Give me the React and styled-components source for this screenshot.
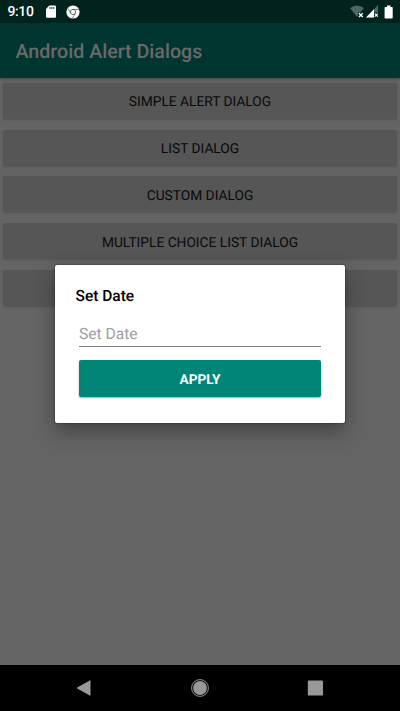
import React from 'react';
import styled, { createGlobalStyle } from 'styled-components';

const GlobalStyle = createGlobalStyle`
  *, *::before, *::after { box-sizing: border-box; }
  body {
    margin: 0;
    background: #000;
    font-family: Roboto, "Liberation Sans", sans-serif;
    text-rendering: geometricPrecision;
  }
  button, input { text-rendering: inherit; }
`;

const Phone = styled.div`
  position: relative;
  width: 400px;
  height: 711px;
  display: flex;
  flex-direction: column;
  background: #000;
  overflow: hidden;
`;

const StatusBar = styled.header`
  flex: none;
  height: 23.4px;
  display: flex;
  align-items: center;
  justify-content: space-between;
  padding: 0 6px 0 7.5px;
  background: #00231e;
  color: #fff;
`;

const StatusGroup = styled.div`
  display: flex;
  align-items: center;
  height: 24px;
  svg { display: block; }
`;

const NotificationGroup = styled(StatusGroup)`
  gap: 10px;
`;

const SystemGroup = styled(StatusGroup)`
  gap: 1px;
  svg:last-child { margin-left: 4px; }
`;

const Clock = styled.span`
  width: 28.5px;
  font-size: 14px;
  font-weight: 500;
  line-height: 24px;
  letter-spacing: -0.4px;
`;

const Activity = styled.div`
  flex: 1;
  display: flex;
  flex-direction: column;
  background: #646464;
`;

const AppBar = styled.div`
  flex: none;
  height: 54.2px;
  padding: 4px 15.5px 0;
  display: flex;
  align-items: center;
  background: #003530;
  box-shadow: 0 1px 3px rgba(0, 0, 0, 0.3);
  color: #696969;
`;

const AppTitle = styled.h1`
  margin: 0;
  font-size: 19.65px;
  font-weight: 500;
  line-height: 26px;
`;

const ButtonList = styled.main`
  display: flex;
  flex-direction: column;
  gap: 10.7px;
  padding: 5.4px 3px;
`;

const ListButton = styled.button`
  height: 36px;
  border: 0;
  border-radius: 2px;
  padding: 3px 0 0;
  background: #565656;
  box-shadow: 0 1px 2px rgba(0, 0, 0, 0.16);
  color: #090909;
  font: 400 13.75px/20px Roboto, "Liberation Sans", sans-serif;
  text-transform: uppercase;
`;

const DialogLayer = styled.div`
  position: absolute;
  inset: 0;
  padding-top: 265px;
  display: flex;
  justify-content: center;
  align-items: flex-start;
`;

const Dialog = styled.section`
  width: 290px;
  height: 157.7px;
  padding: 21px 24px 0;
  display: flex;
  flex-direction: column;
  border-radius: 2px;
  background: #fff;
  box-shadow: 0 0 1.5px rgba(0, 0, 0, 0.9), 0 8px 20px rgba(0, 0, 0, 0.35);
`;

const DialogTitle = styled.h2`
  margin: 0 0 0 -3.5px;
  font-size: 15.5px;
  font-weight: 500;
  line-height: 21px;
  color: #000;
`;

const DateField = styled.input`
  width: 242px;
  height: 27px;
  margin-top: 13px;
  padding: 1px 0 0;
  border: 0;
  border-bottom: 1px solid #808080;
  border-radius: 0;
  outline: none;
  background: transparent;
  font: 400 15.6px/22px Roboto, "Liberation Sans", sans-serif;
  color: #111;
  &::placeholder { color: #9d9d9d; opacity: 1; }
`;

const ApplyButton = styled.button`
  width: 242px;
  height: 37px;
  margin-top: 13px;
  padding: 3px 0 0;
  border: 0;
  border-radius: 2px;
  background: #008577;
  color: #fff;
  box-shadow: 0 1px 2px rgba(0, 0, 0, 0.35);
  font: 700 13.7px/20px Roboto, "Liberation Sans", sans-serif;
`;

const NavigationBar = styled.nav`
  flex: none;
  height: 46.3px;
  display: flex;
  justify-content: center;
  align-items: center;
  gap: 91.5px;
  background: #000;
  svg { display: block; }
`;

const actions = [
  'Simple alert dialog',
  'List dialog',
  'Custom dialog',
  'Multiple choice list dialog',
  '',
];

const CardIcon = () => (
  <svg width="10" height="13" viewBox="0 0 10 13">
    <path d="M3.3.4H9q1 0 1 1v10.3q0 1-1 1H1q-1 0-1-1V4z" fill="#fff" />
    <path d="M4 2v2M5.9 2v2M7.8 2v2" stroke="#00231e" strokeWidth=".9" />
  </svg>
);

const BrowserIcon = () => (
  <svg width="14" height="14" viewBox="0 0 14 14">
    <circle cx="7" cy="7" r="6.6" fill="#fff" />
    <circle cx="7" cy="7" r="2.6" fill="none" stroke="#4a625f" strokeWidth=".9" />
    <path d="M7 4.4h5.8M4.7 8.3 2 3.5M9.3 8.3 6.4 13.3" stroke="#4a625f" strokeWidth=".8" />
  </svg>
);

const WifiIcon = () => (
  <svg width="15" height="13" viewBox="0 0 15 13">
    <path d="M0 3Q7-2.2 14 3L7 12z" fill="#4c6662" />
    <path d="M8 7.5h6V13H8z" fill="#00231e" />
    <path d="m9 8.3 3.7 3.7m0-3.7L9 12" stroke="#fff" strokeWidth="1.4" />
  </svg>
);

const SignalIcon = () => (
  <svg width="13" height="13" viewBox="0 0 13 13">
    <path d="M0 12.4 12 0v12.4z" fill="#4c6662" />
    <path d="M0 12.4 8 4.2v8.2z" fill="#fff" />
    <path d="M8 7.5h5V13H8z" fill="#00231e" />
    <path d="m8.9 8.6 2.8 3.1m0-3.1-2.8 3.1" stroke="#fff" strokeWidth="1.2" />
  </svg>
);

const BatteryIcon = () => (
  <svg width="10" height="14" viewBox="0 0 10 14">
    <path d="M3 .5h3.5V2H8q.7 0 .7.7v10q0 .8-.7.8H1.3q-.7 0-.7-.8v-10q0-.7.7-.7H3z" fill="#fff" />
  </svg>
);

export default function App() {
  return (
    <>
      <GlobalStyle />
      <Phone>
        <StatusBar>
          <NotificationGroup>
            <Clock>9:10</Clock>
            <CardIcon />
            <BrowserIcon />
          </NotificationGroup>
          <SystemGroup>
            <WifiIcon />
            <SignalIcon />
            <BatteryIcon />
          </SystemGroup>
        </StatusBar>
        <Activity>
          <AppBar>
            <AppTitle>Android Alert Dialogs</AppTitle>
          </AppBar>
          <ButtonList>
            {actions.map((label, index) => (
              <ListButton key={index}>{label}</ListButton>
            ))}
          </ButtonList>
        </Activity>
        <NavigationBar>
          <svg width="24" height="24" viewBox="0 0 24 24">
            <path d="M17.5 4.8v14.4q0 .8-.8.4L4.2 12.5q-.7-.5 0-1L16.7 4.4q.8-.4.8.4z" fill="#999" />
          </svg>
          <svg width="24" height="24" viewBox="0 0 24 24">
            <circle cx="12" cy="12" r="8.4" fill="none" stroke="#999" strokeWidth="1" />
            <circle cx="12" cy="12" r="6.9" fill="#999" />
          </svg>
          <svg width="24" height="24" viewBox="0 0 24 24">
            <rect x="3.8" y="4.4" width="15.2" height="15.2" rx="1.2" fill="#999" />
          </svg>
        </NavigationBar>
        <DialogLayer>
          <Dialog role="dialog" aria-label="Set Date">
            <DialogTitle>Set Date</DialogTitle>
            <DateField placeholder="Set Date" />
            <ApplyButton>APPLY</ApplyButton>
          </Dialog>
        </DialogLayer>
      </Phone>
    </>
  );
}
